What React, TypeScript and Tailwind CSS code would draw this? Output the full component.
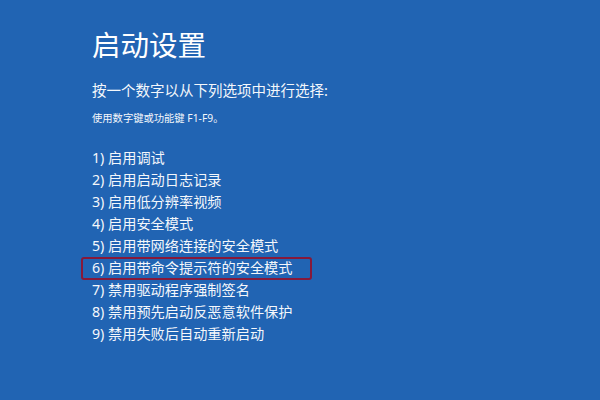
const options = [
  "1) 启用调试",
  "2) 启用启动日志记录",
  "3) 启用低分辨率视频",
  "4) 启用安全模式",
  "5) 启用带网络连接的安全模式",
  "6) 启用带命令提示符的安全模式",
  "7) 禁用驱动程序强制签名",
  "8) 禁用预先启动反恶意软件保护",
  "9) 禁用失败后自动重新启动",
];

export default function App() {
  return (
    <div
      className="w-[600px] h-[400px] bg-[#2164b3] text-[#f4f7fb] pl-[92px] pt-[25px] overflow-hidden"
      style={{ fontFamily: '"Noto Sans", "Noto Sans CJK SC", sans-serif' }}
    >
      <h1 className="text-[28.5px] leading-[40px] font-normal text-white">启动设置</h1>
      <p className="mt-[15px] text-[14.5px] leading-[20px]">按一个数字以从下列选项中进行选择:</p>
      <p className="mt-[10px] text-[10.3px] leading-[16px]">使用数字键或功能键 F1-F9。</p>
      <ul className="mt-[21px] flex flex-col">
        {options.map((opt, i) => (
          <li key={opt} className="relative text-[14.2px] leading-[22px]">
            {opt}
            {i === 5 && (
              <span className="absolute -left-[11px] top-0 w-[231px] h-[23px] border-2 border-[#86193a] rounded-[3px]" />
            )}
          </li>
        ))}
      </ul>
    </div>
  );
}
